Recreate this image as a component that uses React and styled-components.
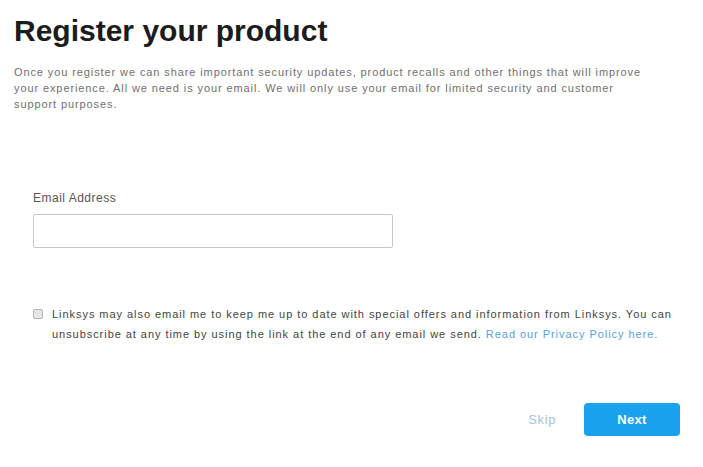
import React from "react";
import styled, { createGlobalStyle } from "styled-components";

const GlobalStyle = createGlobalStyle`
  html, body {
    margin: 0;
    padding: 0;
    background: #ffffff;
  }
  body {
    font-family: "Liberation Sans", Arial, sans-serif;
  }
`;

const Page = styled.div`
  width: 703px;
  height: 467px;
  box-sizing: border-box;
  padding: 14px 14px 0 14px;
  background: #fff;
`;

const Title = styled.h1`
  margin: 0;
  font-size: 30px;
  line-height: 34px;
  font-weight: 700;
  color: #1c1c1c;
`;

const Intro = styled.p`
  margin: 16px 0 0 0;
  font-size: 11px;
  line-height: 16px;
  letter-spacing: 0.9px;
  white-space: nowrap;
  color: #707070;
`;

const Form = styled.div`
  padding: 79px 0 0 19px;
`;

const Label = styled.label`
  display: block;
  font-size: 12px;
  line-height: 14px;
  letter-spacing: 0.5px;
  color: #555;
  margin-bottom: 9px;
`;

const Input = styled.input`
  display: block;
  width: 360px;
  height: 34px;
  box-sizing: border-box;
  border: 1px solid #c8c8c8;
  border-radius: 2px;
  outline: none;
  font-size: 13px;
  padding: 0 8px;
`;

const Consent = styled.div`
  display: flex;
  gap: 9px;
  margin-top: 56px;
`;

const Box = styled.input`
  appearance: none;
  margin: 5px 0 0 0;
  width: 10px;
  height: 10px;
  flex: none;
  box-sizing: border-box;
  border: 1px solid #b5b5b5;
  border-radius: 2px;
  background: #e6e6e6;
`;

const ConsentText = styled.p`
  margin: 0;
  font-size: 11px;
  line-height: 20px;
  letter-spacing: 0.95px;
  white-space: nowrap;
  color: #444;
`;

const Link = styled.a`
  color: #5aa2db;
  text-decoration: none;
`;

const Actions = styled.div`
  display: flex;
  justify-content: flex-end;
  align-items: center;
  gap: 28px;
  margin-top: 59px;
  padding-right: 9px;
`;

const Skip = styled.button`
  border: none;
  background: none;
  padding: 0;
  font-family: inherit;
  font-size: 13px;
  letter-spacing: 0.6px;
  color: #a3c4dd;
  cursor: pointer;
`;

const Next = styled.button`
  width: 96px;
  height: 33px;
  border: none;
  border-radius: 4px;
  background: #1ba2ee;
  color: #fff;
  font-family: inherit;
  font-size: 13px;
  font-weight: 700;
  letter-spacing: 0.3px;
  cursor: pointer;
`;

export default function App() {
  return (
    <Page>
      <GlobalStyle />
      <Title>Register your product</Title>
      <Intro>
        Once you register we can share important security updates, product recalls and other things that will improve
        <br />
        your experience. All we need is your email. We will only use your email for limited security and customer
        <br />
        support purposes.
      </Intro>
      <Form>
        <Label htmlFor="email">Email Address</Label>
        <Input id="email" type="email" />
        <Consent>
          <Box type="checkbox" />
          <ConsentText>
            Linksys may also email me to keep me up to date with special offers and information from Linksys. You can
            <br />
            unsubscribe at any time by using the link at the end of any email we send.{" "}
            <Link href="#">Read our Privacy Policy here.</Link>
          </ConsentText>
        </Consent>
      </Form>
      <Actions>
        <Skip>Skip</Skip>
        <Next>Next</Next>
      </Actions>
    </Page>
  );
}
